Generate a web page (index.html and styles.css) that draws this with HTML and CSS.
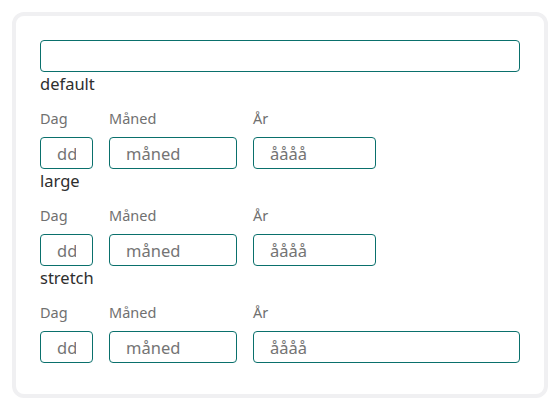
FILE: index.html
```html
<!DOCTYPE html>
<html lang="no">
<head>
<meta charset="utf-8">
<link rel="stylesheet" href="styles.css">
</head>
<body>
<div class="card">
  <input class="field wide" type="text">
  <section class="group">
    <h2 class="heading">default</h2>
    <div class="row">
      <label class="col day"><span class="lbl">Dag</span><input class="field" placeholder="dd"></label>
      <label class="col month"><span class="lbl">Måned</span><input class="field" placeholder="måned"></label>
      <label class="col year"><span class="lbl">År</span><input class="field" placeholder="åååå"></label>
    </div>
  </section>
  <section class="group">
    <h2 class="heading">large</h2>
    <div class="row">
      <label class="col day"><span class="lbl">Dag</span><input class="field" placeholder="dd"></label>
      <label class="col month"><span class="lbl">Måned</span><input class="field" placeholder="måned"></label>
      <label class="col year"><span class="lbl">År</span><input class="field" placeholder="åååå"></label>
    </div>
  </section>
  <section class="group">
    <h2 class="heading">stretch</h2>
    <div class="row">
      <label class="col day"><span class="lbl">Dag</span><input class="field" placeholder="dd"></label>
      <label class="col month"><span class="lbl">Måned</span><input class="field" placeholder="måned"></label>
      <label class="col year grow"><span class="lbl">År</span><input class="field" placeholder="åååå"></label>
    </div>
  </section>
</div>
</body>
</html>
```

FILE: styles.css
```css
html, body {
  margin: 0;
  background: #ffffff;
}
body {
  padding: 12px;
  font-family: "Noto Sans", Lato, sans-serif;
  color: #333333;
}
.card {
  box-sizing: border-box;
  height: 386px;
  border: 4px solid #f0f0f2;
  border-radius: 12px;
  padding: 24px;
  display: flex;
  flex-direction: column;
}
.field {
  box-sizing: border-box;
  display: block;
  width: 100%;
  height: 32px;
  margin: 0;
  border: 1px solid #0a706c;
  border-radius: 4px;
  padding: 0 16px;
  font-family: inherit;
  font-size: 16.5px;
  color: #333;
  background: #fff;
  outline: none;
}
.field::placeholder {
  color: #747474;
}
.heading {
  margin: 0;
  font-size: 16.5px;
  font-weight: 400;
  line-height: 24px;
  color: #2e2e2e;
}
.row {
  display: flex;
  gap: 16px;
  margin-top: 12px;
}
.col {
  display: flex;
  flex-direction: column;
  gap: 9px;
}
.lbl {
  font-size: 14.5px;
  line-height: 20px;
  color: #707070;
}
.day { width: 53px; }
.month { width: 128px; }
.year { width: 123px; }
.grow { flex: 1; }
```
